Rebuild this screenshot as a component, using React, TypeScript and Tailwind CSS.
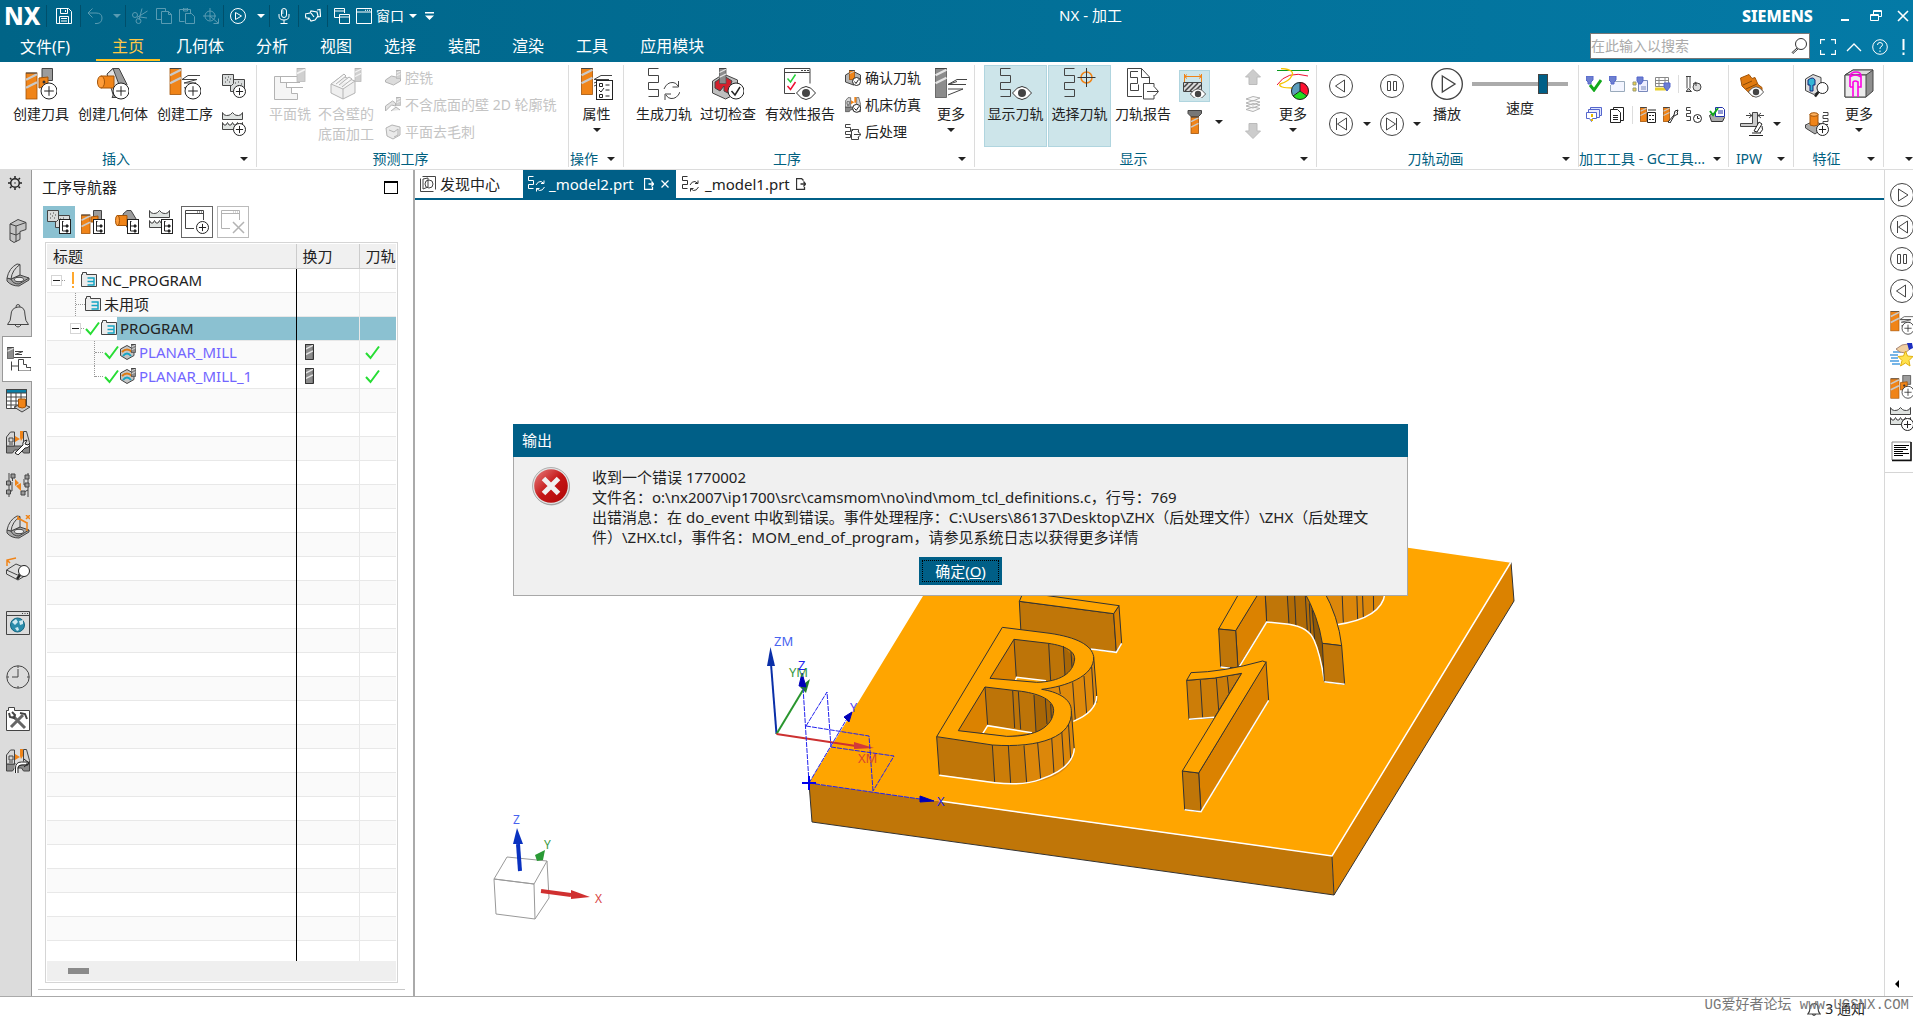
import type { ReactNode } from "react";

interface IconProps {
	size?: number;
}

interface SvgProps {
	size?: number;
	box?: number;
	className?: string;
	children: ReactNode;
}

function Svg({ size = 24, box = 24, className = "", children }: SvgProps) {
	return (
		<svg
			width={size}
			height={size}
			viewBox={`0 0 ${box} ${box}`}
			fill="none"
			stroke="#444"
			strokeWidth={1}
			className={`shrink-0 ${className}`}
			aria-hidden="true"
		>
			{children}
		</svg>
	);
}

/* ---------- icon building blocks ---------- */

function Drill({ x, y, w, h, gray = false }: { x: number; y: number; w: number; h: number; gray?: boolean }) {
	const step = w * 0.72;
	const count = Math.floor((h - w * 0.5) / step);
	const lines = Array.from({ length: count }, (_, i) => y + w * 0.62 + i * step);
	return (
		<g>
			<rect x={x} y={y} width={w} height={h} fill={gray ? "#8c8c8c" : "#f08418"} stroke={gray ? "#555" : "#a35408"} strokeWidth={0.8} />
			{lines.map((ly) => (
				<path key={ly} d={`M${x} ${ly}L${x + w} ${ly - w * 0.5}`} stroke={gray ? "#e4e4e4" : "#c9c9c9"} strokeWidth={w * 0.2} />
			))}
			<path d={`M${x} ${y}H${x + w}`} stroke="#444" />
		</g>
	);
}

function PlusBadge({ x, y, r = 6 }: { x: number; y: number; r?: number }) {
	return (
		<g stroke="#222">
			<circle cx={x} cy={y} r={r} fill="#fff" />
			<path d={`M${x - r * 0.6} ${y}h${r * 1.2}M${x} ${y - r * 0.6}v${r * 1.2}`} />
		</g>
	);
}

function TreeBadge() {
	return (
		<g stroke="#222">
			<rect x={12.5} y={9.5} width={11} height={14} fill="#fff" />
			<path d="M15.5 12v9h3M15.5 16h3" />
			<path d="M19 15h2v2h-2zM19 20h2v2h-2zM15 11.5h1.5" fill="#222" />
		</g>
	);
}

function Eye({ x, y, s = 1 }: { x: number; y: number; s?: number }) {
	return (
		<g transform={`translate(${x} ${y}) scale(${s})`} stroke="#333">
			<path d="M-9.5 0Q0-13 9.5 0Q0 13-9.5 0Z" fill="#fff" />
			<circle r={4} fill="#444" stroke="none" />
		</g>
	);
}

const serpentine = "M10.5 .5H.5v7h10v7H.5v7h10v7H.5";

/* ---------- ribbon icons, 32 px ---------- */

function CreateToolIcon({ size = 32 }: IconProps) {
	return (
		<Svg size={size} box={32}>
			<path d="M17 .5h10.5v12H17z" fill="#9c9c9c" />
			<path d="M14 10l9-1v9l-9 2z" fill="#f08418" stroke="#a35408" />
			<Drill x={1} y={5} w={11} h={26} />
			<circle cx={19} cy={14} r={1.5} fill="#333" stroke="none" />
			<PlusBadge x={24} y={23} r={8} />
		</Svg>
	);
}

function CreateGeometryIcon({ size = 32 }: IconProps) {
	return (
		<Svg size={size} box={32}>
			<path d="M10 6L16 .5h6l8 16-8 13h-7l6-13z" fill="#9c9c9c" />
			<path d="M10 6L16 .5l6 16-6 10z" fill="#e2e2e2" />
			<path d="M4 8h13v12H4z" fill="#f08418" stroke="#a35408" />
			<ellipse cx={4} cy={14} rx={3.5} ry={6} fill="#ff9d3a" stroke="#a35408" />
			<PlusBadge x={24} y={23} r={8} />
		</Svg>
	);
}

function CreateOperationIcon({ size = 32 }: IconProps) {
	return (
		<Svg size={size} box={32}>
			<Drill x={1} y={0.5} w={11} h={26} />
			<path d="M31 7.5H19l-6 4h15M15 15h12l-12 5M14 11.5h14L15 15" />
			<PlusBadge x={24} y={23} r={8} />
		</Svg>
	);
}

function ProgramBase() {
	return (
		<g>
			<path d="M8.5 5.5h14v9h-8v3h-6z" fill="#d9dcdc" />
			<path d="M.5 .5h11v9l-2 2h-9z" fill="#d9dcdc" />
			<path d="M3 4h1M6 3h1M8 5h1M5 6h1M3 8h1M7 8h1M13 9h1M16 8h1M19 10h1M16 12h1" />
		</g>
	);
}

function WaveBase() {
	return (
		<path
			d="M.5 .5v7h20v-7q-1 3-4 3t-4-1l-2-2-2 2q-1 1-4 1T.5 .5M.5 10.5v7h20v-7L19 13h-2l-1.5-2.5L14 13h-2l-1.5-2.5L9 13H7l-1.5-2.5L4 13H2z"
			fill="#dfe3e1"
		/>
	);
}

function ProgramPlusIcon() {
	return (
		<Svg>
			<ProgramBase />
			<PlusBadge x={17.5} y={17.5} />
		</Svg>
	);
}

function MethodPlusIcon() {
	return (
		<Svg>
			<WaveBase />
			<PlusBadge x={17.5} y={17.5} />
		</Svg>
	);
}

function PlanarMillIcon() {
	return (
		<Svg size={32} box={32} className="opacity-40">
			<path d="M6.5 8.5H.5v23h23v-6h-6v-6h-5v-5h-6z" fill="#e8e8e8" />
			<path d="M6 8.5h18M6 14.5h20M12 19.5h17" />
			<Drill x={23} y={0.5} w={8} h={13} gray />
		</Svg>
	);
}

function FloorMillIcon() {
	return (
		<Svg size={32} box={32} className="opacity-40">
			<path d="M1 16l11-8 13 5v12l-12 6-12-6z" fill="#d8d8d8" />
			<path d="M1 16l12 5 12-8M13 21v10M4 14l10-8 2 2-10 8M9 17l10-8 3 2-10 8" fill="#eee" />
			<Drill x={25} y={0.5} w={6} h={13} gray />
		</Svg>
	);
}

function SmallMillIcon({ variant }: { variant: number }) {
	return (
		<Svg size={16} box={16} className="opacity-40">
			{variant === 0 && <path d="M.5 10l6-4 9 2v3l-7 4-8-3z" fill="#aaa" />}
			{variant === 1 && <path d="M.5 9l7-5 3 2v3l-4-1-6 6zM6 14l5-4 4 3" fill="#bbb" />}
			{variant === 2 && <path d="M1 4l6-3 8 2v8l-7 4-6-3zM4 6l5 2 4-3v6l-4 2" fill="#ccc" />}
			{variant < 2 && <Drill x={11.5} y={0.5} w={4} h={8} gray />}
		</Svg>
	);
}

function PropertiesIcon() {
	return (
		<Svg size={32} box={32}>
			<Drill x={0.5} y={0.5} w={11} h={26} />
			<path d="M31 7.5H20l-7 4h15M13 15l8-3M13 18l5-2" />
			<rect x={15.5} y={12.5} width={16} height={19} fill="#fff" stroke="#222" />
			<path d="M18.5 15.5h3v3h-3zM18.5 26.5h3v3h-3zM18 22l2 2 3-4M24.5 17h4M24.5 22h4M24.5 28h4" stroke="#222" />
		</Svg>
	);
}

function GeneratePathIcon() {
	return (
		<Svg size={32} box={32}>
			<path d={serpentine} />
			<path d="M16 21q3-7 9-6.5 3 0 5 3.5M30.5 13v6h-6M32 24q-3 7-9 6.5-3 0-5-3.5M17 32v-6h6" />
		</Svg>
	);
}

function GougeCheckIcon() {
	return (
		<Svg size={32} box={32}>
			<path d="M.5 13l11-7 14 6v13l-12 6-13-6z" fill="#bfbfbf" />
			<path d="M3 14l9-6 8 5-4 12-4-2v-5l-4 5-5-3z" fill="#d3202c" />
			<Drill x={7.5} y={0.5} w={6.5} h={15} gray />
			<circle cx={24} cy={23} r={8} fill="#fff" stroke="#222" />
			<path d="M19.5 23l3.5 4 5-8" stroke="#222" strokeWidth={1.5} />
		</Svg>
	);
}

function ReportIcon() {
	return (
		<Svg size={32} box={32}>
			<path d="M11 25.5H.5V.5H26v15M.5 4.5H26" />
			<path d="M17 2.5h2M20 2.5h2M23 2.5h2" />
			<path d="M3.5 10.5l3 3.5 5-7.5" stroke="#25d33a" strokeWidth={1.5} />
			<path d="M3.5 18l3 3.5 5-7.5" stroke="#ee1133" strokeWidth={1.5} />
			<Eye x={22} y={25} />
		</Svg>
	);
}

function VerifyIcon() {
	return (
		<Svg size={16} box={16}>
			<path d="M.5 5l7-4 8 4v6l-7 4-8-3z" fill="#b5b5b5" />
			<Drill x={4.5} y={0.5} w={5} h={9} />
			<circle cx={11.5} cy={11.5} r={4} fill="#fff" stroke="#222" />
			<path d="M9.5 11.5l1.5 2 2.5-4" stroke="#222" />
		</Svg>
	);
}

function MachineBase() {
	return (
		<g>
			<path d="M.5 15h23v7h-6l-2-3h-7l-2 3h-6z" fill="#8a8a8a" />
			<path d="M.5 15V6l4-5h4v14zM17.5 15V.5h3l3 11V15z" fill="#d6d6d6" />
			<path d="M3 7h4v4H3zM3 13h4" />
			<path d="M9 5v6l5-3zM14 0h3v7l-2 3-1-3z" fill="#f08418" stroke="none" />
		</g>
	);
}

function SimulateIcon() {
	return (
		<Svg size={16} box={24}>
			<MachineBase />
			<circle cx={17.5} cy={17} r={6} fill="#fff" stroke="#222" strokeWidth={1.5} />
			<path d="M14 17l3 3 4-6" stroke="#222" strokeWidth={1.5} />
		</Svg>
	);
}

function PostIcon() {
	return (
		<Svg size={16} box={16}>
			<path d="M5.5 .5h-5v3h5v4h-5v3h5v3h-5M8 6.5H6.5v9h7v-3M6.5 5.5h7v3M9 10.5h7M13 7.5l3 3-3 3" />
		</Svg>
	);
}

function MoreOperationsIcon() {
	return (
		<Svg size={32} box={32}>
			<Drill x={0.5} y={0.5} w={11} h={29} gray />
			<path d="M32 11.5H22l-9 5h18M13 21h15l-15 6M13 16.5l9-3" />
		</Svg>
	);
}

function ShowPathIcon() {
	return (
		<Svg size={32} box={32}>
			<path d={serpentine} />
			<Eye x={22} y={25} />
		</Svg>
	);
}

function SelectPathIcon() {
	return (
		<Svg size={32} box={32}>
			<path d={serpentine} />
			<circle cx={22.5} cy={9.5} r={5.5} stroke="#f08418" strokeWidth={1.5} />
			<path d="M13.5 9.5h18M22.5 0v19" stroke="#333" />
		</Svg>
	);
}

function PathReportIcon() {
	return (
		<Svg size={32} box={32}>
			<path d="M15 28.5H.5V.5h14l8 8.5v7M14.5 .5v9h8" />
			<path d="M11 3.5H3.5v6h7v6h-7v7h8v-6" />
			<path d="M27 19v-3.5H16.5V31H27v-4M20 23.5h11M27.5 19l4 4.5-4 4.5" />
		</Svg>
	);
}

function StockViewIcon() {
	return (
		<Svg>
			<path d="M1.5 2.5h17M1.5 0v8M18.5 0v8M4 .5l-2.5 2L4 4.5M16 .5l2.5 2-2.5 2" stroke="#f08418" />
			<path d="M.5 8.5h18v9H.5z" fill="#d9d9d9" />
			<path d="M1 13l4-4M2 17l8-8M7 17l8-8M12 17l6-6" strokeWidth={1.5} />
			<Eye x={15} y={20} s={0.8} />
		</Svg>
	);
}

function BoltIcon() {
	return (
		<Svg>
			<path d="M5 .5h13.5v3L15 7H8.5L5 3.5z" fill="#777" />
			<Drill x={8} y={7} w={7.5} h={16.5} />
		</Svg>
	);
}

function FatArrow({ down = false }: { down?: boolean }) {
	return (
		<Svg size={16} box={16} className={down ? "rotate-180" : ""}>
			<path d="M8 .5L15.5 8H12v7.5H4V8H.5z" fill="#ccc" stroke="#bbb" />
		</Svg>
	);
}

function LayersIcon() {
	return (
		<Svg size={16} box={16} className="opacity-40">
			<path d="M1 3L8 .5 15 2 8 5zM1 7l7-2.5L15 6 8 9zM1 10l7-2.5L15 9l-7 3zM1 13.5L8 11l7 1.5-7 3z" fill="#eee" />
		</Svg>
	);
}

function MoreDisplayIcon() {
	return (
		<Svg size={32} box={32}>
			<path d="M0 2.5h32" stroke="#0a9a1f" />
			<path d="M0 17Q10 2 31 8" stroke="#ee1133" />
			<path d="M4 .5q14 1 11 7T3 16q-2 4 13 4" stroke="#f5c400" strokeWidth={1.3} />
			<path d="M23 23V14a9 9 0 0 1 7.5 13.5z" fill="#ff1030" stroke="none" />
			<path d="M23 23l7.5 4.5a9 9 0 0 1-15 0z" fill="#22dd22" stroke="none" />
			<path d="M23 23l-7.5 4.5A9 9 0 0 1 23 14z" fill="#5b9dbb" stroke="none" />
			<circle cx={23} cy={23} r={8.5} stroke="#222" />
			<path d="M23 14v9l7 5M23 23l-7 5" stroke="#222" />
		</Svg>
	);
}

type PlayKind = "play" | "back" | "pause" | "prev" | "next";

const playPaths: Record<PlayKind, string> = {
	play: "M8.5 6l9.5 6-9.5 6z",
	back: "M15.5 6L6.5 12l9 6z",
	pause: "M7.5 7.5h3v9h-3zM13.5 7.5h3v9h-3z",
	prev: "M17.5 6L8.5 12l9 6zM7.5 6v12",
	next: "M6.5 6l9 6-9 6zM16.5 6v12",
};

function PlayIcon({ kind, size = 24 }: { kind: PlayKind; size?: number }) {
	return (
		<Svg size={size}>
			<circle cx={12} cy={12} r={11.5} fill="#fff" />
			<path d={playPaths[kind]} />
		</Svg>
	);
}

/* ---------- GC toolkit icons, 16 px ---------- */

const gcHead = "M0 0h7v4l-2 2v2H2V6L0 4z";

function GcIcon({ kind }: { kind: string }) {
	return (
		<Svg size={16} box={16}>
			{kind === "check" && (
				<>
					<path d={gcHead} fill="#6d7fd0" stroke="#56c" />
					<path d="M4 9l4 5 7-10" stroke="#12a81c" strokeWidth={3} />
				</>
			)}
			{kind === "sheet" && (
				<>
					<path d="M4.5 5.5h11v10h-14V9" fill="#f3f5ff" stroke="#9ab" />
					<path d={gcHead} fill="#6d7fd0" stroke="#56c" />
				</>
			)}
			{kind === "tree" && (
				<>
					<path d="M6.5 4.5h9v11h-9z" fill="#eef" stroke="#78b" />
					<path d="M1 6h3v3H1zM1 12h3v3H1z" fill="#f2d547" stroke="#997" />
					<path d="M5 1h6v4L9 8H7L5 5z" fill="#6d7fd0" stroke="#56c" />
					<path d="M9 11h5M9 13h5" stroke="#78b" />
				</>
			)}
			{kind === "grid" && (
				<>
					<path d="M.5 1.5h13v9H.5zM.5 4.5h13M.5 7.5h13M4 1.5v9M10 1.5v9" stroke="#888" />
					<path d="M0 13h12" stroke="#e6cf2b" strokeWidth={3} />
					<path d="M9 7h6v4l-3 4-3-4z" fill="#6d7fd0" stroke="#56c" />
				</>
			)}
			{kind === "probe" && (
				<>
					<path d="M0 .5h5M1 .5v12M4 .5v12M0 15.5l2.5-3 3 3z" fill="#ccc" />
					<circle cx={11} cy={11} r={4} fill="#ddd" />
					<path d="M7 8l3-2v4" />
				</>
			)}
			{kind === "query" && (
				<>
					<path d="M4.5 .5h11v8h-11z" fill="#dce4ff" stroke="#56c" />
					<path d="M2.5 2.5h11v8h-11z" fill="#eef" stroke="#56c" />
					<path d="M.5 5.5h10v6h-4l-1 3-2-3h-3z" fill="#fff" stroke="#56c" />
					<path d="M6 7v3M6 12v2" stroke="#e6b800" strokeWidth={2} />
				</>
			)}
			{kind === "doc" && (
				<path d="M4.5 3V.5h10v13H12M1.5 2.5h7l3 3v10h-10zM4 8.5h5M4 10.5h5M4 12.5h5" stroke="#222" />
			)}
			{kind === "props" && (
				<>
					<Drill x={0.5} y={0.5} w={6} h={14} />
					<path d="M7.5 5.5h8v10h-8zM9 8.5h2M12 8.5h2M9 12.5h2M12 12.5h2M8 3h8" fill="#fff" stroke="#222" />
				</>
			)}
			{kind === "wrench" && (
				<>
					<Drill x={0.5} y={0.5} w={6} h={14} />
					<path d="M5 15l6-7 1-4 3-1-1 3 1 1-4 2-4 7z" fill="#fff" stroke="#222" />
				</>
			)}
			{kind === "time" && (
				<>
					<path d="M4.5 .5h-4v3h4v3h-4v3h4v4h-4" />
					<circle cx={11.5} cy={11.5} r={4} stroke="#222" />
					<path d="M11.5 9v2.5h2" stroke="#222" />
				</>
			)}
			{kind === "print" && (
				<>
					<path d="M.5 8.5l3-2h9l3 4-2 4h-11z" fill="#aaa" stroke="#333" />
					<path d="M6.5 .5h7l2 2v7h-9z" fill="#fff" stroke="#23a" />
					<path d="M9 4h5M9 6h5" stroke="#23a" />
					<path d="M1 4l3 4 5-7" stroke="#12a81c" strokeWidth={2} />
				</>
			)}
		</Svg>
	);
}

function IpwShowIcon() {
	return (
		<Svg>
			<path d="M.5 4L9 .5l3 4 3-1 3 7 4 3v4l-9 5L2 12z" fill="#e07a10" stroke="#a35408" />
			<path d="M3 11l9-4M6 15l11-5" stroke="#8a4a05" />
			<Eye x={16} y={18} s={0.8} />
		</Svg>
	);
}

function IpwMeasureIcon() {
	return (
		<Svg>
			<path d="M.5 11.5h12V.5h5v14H.5z" fill="#ccc" />
			<path d="M6 3.5h6M24 3.5h-6M9 1l3 2.5L9 6M21 1l-3 2.5L21 6" />
			<path d="M9 23.5h14M12 21h9" stroke="#222" />
			<path d="M14 19l5-9 3 2-5 8zM22 14q2 4-2 7" fill="#fff" stroke="#222" />
		</Svg>
	);
}

function FeatureFindIcon() {
	return (
		<Svg>
			<path d="M.5 5L8 .5l8 3v12l-7 5-8.5-4z" fill="#ddd" />
			<path d="M3 6q5-4 7 0v5H8v6H5v-6H3z" fill="#35b5d5" stroke="#127" />
			<circle cx={17.5} cy={14} r={5.5} fill="#fff" stroke="#222" />
			<path d="M13.5 18L10 22.5" stroke="#222" strokeWidth={2.5} />
		</Svg>
	);
}

function FeaturePathIcon() {
	return (
		<Svg>
			<path d="M.5 13L9 9l9 4-8 6z" fill="#c9c9c9" />
			<path d="M.5 13v3l9.5 6 8-6v-3" fill="#aaa" />
			<path d="M5 2v11q4 2 8 0V2z" fill="#f08418" stroke="#a35408" />
			<ellipse cx={9} cy={2.5} rx={4} ry={1.8} fill="#ffb25e" stroke="#a35408" />
			<path d="M18 .5h5v3h-5v3h5v3h-5v3h5" />
			<PlusBadge x={17.5} y={17.5} />
		</Svg>
	);
}

function MoreFeaturesIcon() {
	return (
		<Svg size={32} box={32}>
			<path d="M2 7l8-5h20v21l-7 6H2z" fill="#8f8f8f" />
			<path d="M2 7l8-5h20l-7 5z" fill="#dcdcdc" />
			<path d="M2 7h21v22H2z" fill="#ececec" />
			<path d="M7 19V8q1-4 6-4t5 4v11h-3v10M7 19h3v10M7 9q5-4 11 0M10 19v-5q2-2 5 0v5" stroke="#ff00e5" strokeWidth={1.6} />
		</Svg>
	);
}

/* ---------- resource bar / navigator icons ---------- */

function TreeIcon({ kind }: { kind: "program" | "tool" | "geometry" | "method" }) {
	return (
		<Svg>
			{kind === "program" && <ProgramBase />}
			{kind === "tool" && (
				<>
					<path d="M12.5 .5h8v9h-8z" fill="#9c9c9c" />
					<path d="M10 7l7-1v6h-7z" fill="#f08418" stroke="#a35408" />
					<Drill x={0.5} y={5} w={8.5} h={18.5} />
				</>
			)}
			{kind === "geometry" && (
				<>
					<path d="M8 4L12 .5h4l6 10-6 12-6-8z" fill="#9c9c9c" />
					<path d="M2 5.5h10v10H2z" fill="#f08418" stroke="#a35408" />
					<ellipse cx={2.5} cy={10.5} rx={2} ry={5} fill="#ff9d3a" stroke="#a35408" />
				</>
			)}
			{kind === "method" && <WaveBase />}
			<TreeBadge />
		</Svg>
	);
}

function WindowPlusIcon({ close = false }: { close?: boolean }) {
	return (
		<Svg className={close ? "opacity-40" : ""}>
			<path d="M9 18.5H.5V.5h18V10M.5 3.5h18M12 2h1M14 2h1M16 2h1" />
			{close ? <path d="M12 12l11 11M23 12L12 23" strokeWidth={1.5} /> : <PlusBadge x={17.5} y={17.5} />}
		</Svg>
	);
}

function FolderIcon() {
	return (
		<Svg size={16} box={16}>
			<path d="M.5 14.5v-12h1v-2h4v2h10v12z" fill="#ececec" />
			<path d="M6.5 6h7M13 5.5v8M6.5 9.5h6M6.5 13h7" stroke="#16a5c4" strokeWidth={1.5} />
		</Svg>
	);
}

function PlanarOpIcon() {
	return (
		<Svg size={16} box={16}>
			<path d="M.5 5L7 1.5l7 4v6l-7 4-6.5-4z" fill="#c5c5c5" />
			<path d="M2 8q5-5 10 0" stroke="#e07a10" strokeWidth={2} />
			<path d="M3 12q4-5 8 0" stroke="#16a5c4" strokeWidth={2} />
			<Drill x={11.5} y={0.5} w={4} h={8} gray />
		</Svg>
	);
}

function CheckIcon() {
	return (
		<Svg size={16} box={16}>
			<path d="M1 9l4.5 5L14 2.5" stroke="#27dd34" strokeWidth={2} />
		</Svg>
	);
}

function BracketBase() {
	return (
		<>
			<path d="M1 15v3q4 5 12 5l10-6v-2l-9-3L5 16z" fill="#a8a8a8" />
			<path d="M1 15Q3 5 11 1l3 .5V12l-9 4z" fill="#dadada" />
			<path d="M5 16Q6 7 14 1.5M5 16q2 5 8 5l10-6" />
			<ellipse cx={13} cy={16.5} rx={4.5} ry={2.2} fill="#ededed" />
		</>
	);
}

const railIcons: Record<string, ReactNode> = {
	assembly: (
		<>
			<path d="M4 5L12 .5l8 3v7l-6 2v8l-6 3L4 21z" fill="#c4c4c4" />
			<path d="M4 5l6 2 10-3.5M10 7v16M4 14l6 2 4-2" />
		</>
	),
	part: <BracketBase />,
	bell: <path d="M1.5 20.5Q5 17 5 11 5 4 12 3t7 8q0 6 3.5 9.5zM10 3q0-2.5 2-2.5T14 3M9 21q3 4 6 0" />,
	operation: (
		<>
			<Drill x={0.5} y={0.5} w={6} h={11} gray />
			<path d="M7 10.5h17M8 4.5h8l-8 3h7M4.5 14.5v9M4.5 19h7M11.5 24V12.5h5v5h3v3H24V24z" />
		</>
	),
	table: (
		<>
			<path d="M.5 .5h20v19H.5zM.5 8h20M.5 12h20M.5 16h20M5 4v15M10 4v15M15 4v15" fill="#fff" />
			<path d="M.5 .5h20V4H.5z" fill="#0b7fa6" />
			<path d="M8 18l8-3 8 3-8 5z" fill="#ccc" />
			<path d="M12.5 10v8q4 2 7 0v-8z" fill="#f08418" stroke="#a35408" />
		</>
	),
	machineTool: (
		<>
			<MachineBase />
			<path d="M9 22l8-8q-1-4 4-5l-2 4 3 1 2-2q0 5-5 5l-7 7z" fill="#fff" stroke="#222" />
		</>
	),
	dependency: (
		<>
			<path d="M3 0v24M6.5 4v4M3 10H1M3 18h3V9M22 0v24M18 6v6h4M16 20l6-3" />
			<path d="M5 1h4v4H5zM.5 8h4v4h-4zM.5 17h4v4h-4zM19 2h4v4h-4zM19 10h4v4h-4zM15 18h4v4h-4z" fill="#999" />
			<path d="M9 6l4 4-4 3zM15 10v8l-5-5z" fill="#f08418" stroke="none" />
		</>
	),
	pmi: (
		<>
			<BracketBase />
			<path d="M12 1v4M12 3l9 5M21 7v9M20 0l4 4M24 0l-4 4" stroke="#f08418" strokeWidth={1.5} />
		</>
	),
	inspect: (
		<>
			<path d="M.5 13L10 7l12 5v5l-10 6L.5 17z" fill="#ddd" />
			<path d="M.5 13l11 5L22 12" />
			<path d="M1 9V3l9-2M1 3l3 3" stroke="#f08418" strokeWidth={1.5} />
			<circle cx={18} cy={14} r={5.5} fill="#fff" stroke="#222" />
			<path d="M14 18l-3 4" stroke="#222" strokeWidth={2.5} />
		</>
	),
	web: (
		<>
			<path d="M.5 .5h23v23H.5zM.5 4.5h23M16 2.5h1M18.5 2.5h1M21 2.5h1" />
			<circle cx={11.5} cy={14} r={7} fill="#2b8cab" stroke="#15667f" />
			<path d="M6 11l4-3 2 3-3 3zM13 10l4-1v4l-3 1zM9 17l3-1 1 3-2 1z" fill="#cfe9f1" stroke="none" />
		</>
	),
	history: (
		<>
			<circle cx={12} cy={12} r={11.2} />
			<path d="M12 4v8H6M12 1v2M12 21v2M1 12h2M21 12h2" />
		</>
	),
	tools: (
		<>
			<path d="M.5 3.5h2v-3h6v3h15v20H.5z" fill="#fff" />
			<path d="M5 20L17 8M7 9l12 12" stroke="#666" strokeWidth={3} />
			<path d="M3 6l1 4 4 1 1-3-3-3M14 6l5 1 2 5" strokeWidth={2} />
		</>
	),
	machineOut: (
		<>
			<MachineBase />
			<path d="M10 24v-5q0-5 6-5h4" stroke="#fff" strokeWidth={3} />
			<path d="M9.5 24v-5q0-6 6-6h7M18 10l5 4-5 4M12 24v-5q0-3 4-3h6" stroke="#222" />
		</>
	),
};

const railItems = [
	{ key: "assembly", title: "装配导航器", box: "mt-4 h-[38px]" },
	{ key: "part", title: "部件导航器", box: "mt-1 h-[42px]" },
	{ key: "bell", title: "通知中心", box: "h-10" },
	{ key: "operation", title: "工序导航器", box: "h-[46px] border border-r-0 border-[#999] bg-white" },
	{ key: "table", title: "加工特征导航器", box: "h-[38px]" },
	{ key: "machineTool", title: "机床导航器", box: "mt-[2px] h-[42px]" },
	{ key: "dependency", title: "依赖关系", box: "h-[42px]" },
	{ key: "pmi", title: "PMI 导航器", box: "h-[42px]" },
	{ key: "inspect", title: "检查导航器", box: "h-[42px]" },
	{ key: "web", title: "Web 浏览器", box: "mt-3 h-[42px]" },
	{ key: "history", title: "历史记录", box: "mt-3 h-[42px]" },
	{ key: "tools", title: "加工向导", box: "h-[42px]" },
	{ key: "machineOut", title: "机床库", box: "h-[42px]" },
];

/* ---------- shared controls ---------- */

function Caret({ className = "" }: { className?: string }) {
	return (
		<svg width={8} height={4} viewBox="0 0 8 4" className={`shrink-0 ${className}`} aria-hidden="true">
			<path d="M0 0h8L4 4z" fill="currentColor" />
		</svg>
	);
}

function BigButton({
	icon,
	label,
	width = "w-16",
	className = "",
	caret = false,
}: {
	icon: ReactNode;
	label: ReactNode;
	width?: string;
	className?: string;
	caret?: boolean;
}) {
	return (
		<button type="button" className={`flex h-[82px] shrink-0 flex-col items-center pt-[3px] ${width} ${className}`}>
			{icon}
			<span className="mt-1 text-sm leading-5 whitespace-nowrap">{label}</span>
			{caret && <Caret className="mt-1" />}
		</button>
	);
}

function RowButton({ icon, label }: { icon: ReactNode; label: string }) {
	return (
		<button type="button" className="flex h-[27px] items-center gap-1 pb-[2px] text-sm whitespace-nowrap">
			{icon}
			{label}
		</button>
	);
}

function RibbonGroup({
	label,
	width,
	caret = true,
	children,
}: {
	label: string;
	width: string;
	caret?: boolean;
	children: ReactNode;
}) {
	return (
		<section className={`flex shrink-0 flex-col border-r border-[#dcdcdc] ${width}`}>
			<div className="flex h-[86px]">{children}</div>
			<div className="flex h-4 items-center text-[#00607f]">
				<span className="flex-1 text-center text-sm leading-4 whitespace-nowrap">{label}</span>
				{caret ? (
					<button type="button" aria-label={`${label}选项`} className="flex h-4 w-6 shrink-0 items-center justify-center text-[#222]">
						<Caret />
					</button>
				) : (
					<span className="w-6 shrink-0" />
				)}
			</div>
		</section>
	);
}

function IconButton({ title, children, className = "" }: { title: string; children?: ReactNode; className?: string }) {
	return (
		<button type="button" aria-label={title} className={`flex shrink-0 items-center justify-center ${className}`}>
			{children}
		</button>
	);
}

/* ---------- title bar and menu ---------- */

function TitleSeparator() {
	return <span className="h-[22px] w-px shrink-0 bg-[#004f6b]" />;
}

function TitleBar() {
	return (
		<div className="flex h-[31px] items-center text-white">
			<span className="w-[46px] pl-1 text-2xl leading-6 font-extrabold">NX</span>
			<TitleSeparator />
			<IconButton title="保存" className="w-[33px]">
				<Svg size={16} box={16} className="[&_path]:stroke-white">
					<path d="M.5 .5h12l3 3v12H.5zM4.5 .5v5h7v-5M9.5 2v2M3.5 15.5v-7h9v7M5 10.5h6M5 13h6" />
				</Svg>
			</IconButton>
			<TitleSeparator />
			<div className="flex items-center opacity-35">
				<IconButton title="撤消" className="w-7">
					<Svg size={16} box={16} className="[&_path]:stroke-white">
						<path d="M5.5 .5L1 5l4.5 4.5M1 5h8q6 0 6 5t-5 5.5H8" />
					</Svg>
				</IconButton>
				<IconButton title="撤消列表" className="w-4">
					<Caret />
				</IconButton>
			</div>
			<TitleSeparator />
			<div className="flex items-center pl-[2px] opacity-35">
				<IconButton title="剪切" className="w-6">
					<Svg size={16} box={16} className="[&_*]:stroke-white">
						<path d="M15.5 3L5 9.5M10 .5L8 8l-1 4" />
						<circle cx={3} cy={7} r={2.5} />
						<circle cx={6.5} cy={13} r={2.5} />
						<path d="M8 9l7 1" />
					</Svg>
				</IconButton>
				<IconButton title="复制" className="w-[23px]">
					<Svg size={16} box={16} className="[&_path]:stroke-white">
						<path d="M5.5 11.5h-5V.5h9v3M5.5 3.5h7l3 3v9h-10zM12.5 3.5v3h3" />
					</Svg>
				</IconButton>
				<IconButton title="粘贴" className="w-[23px]">
					<Svg size={16} box={16} className="[&_path]:stroke-white">
						<path d="M5.5 13.5h-5v-12h11v4M4.5 0v3h4V0zM6.5 5.5h6l3 3v7h-9z" />
					</Svg>
				</IconButton>
				<IconButton title="移动对象" className="w-[25px]">
					<Svg size={16} box={16} className="[&_*]:stroke-white">
						<circle cx={7} cy={8} r={5} />
						<path d="M0 8h13M7 0v12M7 8l8 7M10.5 15.5h5v-5" />
					</Svg>
				</IconButton>
			</div>
			<TitleSeparator />
			<IconButton title="播放" className="w-7">
				<Svg size={16} box={16} className="[&_*]:stroke-white">
					<circle cx={8} cy={8} r={7.5} />
					<path d="M5.5 4.5l6 3.5-6 3.5z" />
				</Svg>
			</IconButton>
			<IconButton title="播放列表" className="w-[17px]">
				<Caret />
			</IconButton>
			<TitleSeparator />
			<IconButton title="语音" className="w-7">
				<Svg size={16} box={16} className="[&_*]:stroke-white">
					<rect x={5.5} y={0.5} width={5} height={9} rx={2.5} />
					<path d="M3 6v2q0 4 5 4t5-4V6M8 12v3M4.5 15.5h7M5.5 3h2M5.5 5h2" />
				</Svg>
			</IconButton>
			<TitleSeparator />
			<IconButton title="触控" className="w-7">
				<Svg size={16} box={16} className="[&_path]:stroke-white">
					<path d="M0 6l5-1 1-2 6 1 1 4-3 4-4 1-2-3H1zM6 5l3 4M12 2l3-.5 .5 7-3 .5M4 10l-1 2" strokeWidth={1.2} />
				</Svg>
			</IconButton>
			<TitleSeparator />
			<IconButton title="切换窗口" className="w-7">
				<Svg size={16} box={16} className="[&_path]:stroke-white">
					<path d="M5 9.5H.5v-9h10V5M.5 3h10M5.5 6.5h10v9h-10zM5.5 9h10" />
				</Svg>
			</IconButton>
			<button type="button" className="flex items-center gap-1 text-sm">
				<Svg size={16} box={16} className="[&_path]:stroke-white">
					<path d="M.5 .5h15v15H.5zM.5 4h15M9 2.3h1M11 2.3h1M13 2.3h1" />
				</Svg>
				窗口
				<Caret className="ml-px" />
			</button>
			<IconButton title="自定义" className="ml-[2px] w-5">
				<svg width={9} height={8} viewBox="0 0 9 8" fill="#fff" aria-hidden="true">
					<path d="M0 0h9v1.5H0zM0 3.5h9L4.5 8z" />
				</svg>
			</IconButton>
			<h1 className="flex-1 text-center text-[15px]">NX - 加工</h1>
			<span className="w-[89px] text-base font-extrabold">SIEMENS</span>
			<IconButton title="最小化" className="w-7">
				<span className="mt-2 h-[2px] w-2 bg-white" />
			</IconButton>
			<IconButton title="还原" className="w-[34px]">
				<Svg size={12} box={12} className="[&_path]:stroke-white">
					<path d="M3.5 4V.5h8v6H9M.5 4.5h8v6h-8zM3.5 1.5h8M.5 5.5h8" />
				</Svg>
			</IconButton>
			<IconButton title="关闭" className="w-5">
				<Svg size={12} box={12} className="[&_path]:stroke-white">
					<path d="M1 1l10 10M11 1L1 11" strokeWidth={1.6} />
				</Svg>
			</IconButton>
		</div>
	);
}

const menuTabs = ["主页", "几何体", "分析", "视图", "选择", "装配", "渲染", "工具", "应用模块"];

function MenuBar() {
	return (
		<nav className="flex h-[31px] items-center text-base text-white">
			<button type="button" className="h-full w-24 pr-[6px] text-center">
				文件(F)
			</button>
			{menuTabs.map((tab) => (
				<button
					key={tab}
					type="button"
					className={`h-[29px] border-b-2 px-4 whitespace-nowrap ${
						tab === "主页" ? "border-[#ffc220] text-[#ffc845]" : "border-transparent"
					}`}
				>
					{tab}
				</button>
			))}
			<label className="mr-[5px] mb-[2px] ml-auto flex h-[26px] w-[220px] items-center border border-[#777] bg-white">
				<input
					type="search"
					aria-label="搜索"
					placeholder="在此输入以搜索"
					className="min-w-0 flex-1 text-sm text-[#222] outline-none placeholder:text-[#aaa]"
				/>
				<Svg size={16} box={16} className="mr-[2px]">
					<circle cx={10} cy={6} r={5.5} stroke="#333" />
					<path d="M6 10l-5 4.5 1 1L7 11" stroke="#333" />
				</Svg>
			</label>
			<IconButton title="全屏" className="w-[26px]">
				<Svg size={16} box={16} className="[&_path]:stroke-white">
					<path d="M.5 5V.5H5M11 .5h4.5V5M15.5 11v4.5H11M5 15.5H.5V11" strokeWidth={1.3} />
				</Svg>
			</IconButton>
			<IconButton title="最小化功能区" className="w-[26px]">
				<Svg size={16} box={16} className="[&_path]:stroke-white">
					<path d="M1 12l7-7 7 7" strokeWidth={1.3} />
				</Svg>
			</IconButton>
			<IconButton title="帮助" className="w-[26px]">
				<Svg size={16} box={16} className="[&_*]:stroke-white">
					<circle cx={8} cy={8} r={7.3} />
					<path d="M5.5 6q0-2.5 2.5-2.5t2.500 2.2q0 1.3-1.5 2.1T8 10M8 11.5V13" />
				</Svg>
			</IconButton>
			<IconButton title="警报" className="w-5">
				<svg width={3} height={16} viewBox="0 0 3 16" fill="#fff" aria-hidden="true">
					<path d="M.5 0h2v11h-2zM.5 13.5h2V16h-2z" />
				</svg>
			</IconButton>
		</nav>
	);
}

/* ---------- ribbon ---------- */

function ToolbarDivider() {
	return <span className="h-[18px] w-px bg-[#ddd]" />;
}

function Ribbon() {
	return (
		<div className="flex h-[108px] shrink-0 border-b border-[#dcdcdc] bg-white pt-[3px] pb-[2px] text-[#222]">
			<RibbonGroup label="插入" width="w-[257px]">
				<BigButton icon={<CreateToolIcon />} label="创建刀具" className="ml-[9px]" />
				<BigButton icon={<CreateGeometryIcon />} label="创建几何体" width="w-20" />
				<BigButton icon={<CreateOperationIcon />} label="创建工序" />
				<div className="flex w-[34px] flex-col items-center gap-[14px] pt-[9px]">
					<IconButton title="创建程序">
						<ProgramPlusIcon />
					</IconButton>
					<IconButton title="创建方法">
						<MethodPlusIcon />
					</IconButton>
				</div>
			</RibbonGroup>

			<RibbonGroup label="预测工序" width="w-[312px]" caret={false}>
				<BigButton icon={<PlanarMillIcon />} label="平面铣" width="w-12" className="ml-[9px] text-[#c4c4c4]" />
				<BigButton
					icon={<FloorMillIcon />}
					label={
						<>
							不含壁的
							<br />
							底面加工
						</>
					}
					className="text-[#c4c4c4]"
				/>
				<div className="flex flex-col pl-[7px] text-[#c4c4c4]">
					<RowButton icon={<SmallMillIcon variant={0} />} label="腔铣" />
					<RowButton icon={<SmallMillIcon variant={1} />} label="不含底面的壁 2D 轮廓铣" />
					<RowButton icon={<SmallMillIcon variant={2} />} label="平面去毛刺" />
				</div>
			</RibbonGroup>

			<RibbonGroup label="操作" width="w-[55px]">
				<BigButton icon={<PropertiesIcon />} label="属性" width="w-[55px]" caret />
			</RibbonGroup>

			<RibbonGroup label="工序" width="w-[351px]">
				<BigButton icon={<GeneratePathIcon />} label="生成刀轨" className="ml-2" />
				<BigButton icon={<GougeCheckIcon />} label="过切检查" />
				<BigButton icon={<ReportIcon />} label="有效性报告" width="w-20" />
				<div className="flex w-[88px] flex-col pl-[5px]">
					<RowButton icon={<VerifyIcon />} label="确认刀轨" />
					<RowButton icon={<SimulateIcon />} label="机床仿真" />
					<RowButton icon={<PostIcon />} label="后处理" />
				</div>
				<BigButton icon={<MoreOperationsIcon />} label="更多" width="w-[46px]" caret />
			</RibbonGroup>

			<RibbonGroup label="显示" width="w-[342px]">
				<BigButton icon={<ShowPathIcon />} label="显示刀轨" width="w-[63px]" className="ml-[9px] bg-[#cde5ea] outline -outline-offset-1 outline-[#b0d5df]" />
				<BigButton icon={<SelectPathIcon />} label="选择刀轨" width="w-[63px]" className="ml-px bg-[#cde5ea] outline -outline-offset-1 outline-[#b0d5df]" />
				<BigButton icon={<PathReportIcon />} label="刀轨报告" />
				<div className="ml-1 grid w-[60px] shrink-0 grid-cols-[32px_16px] content-start gap-y-2 pt-[5px]">
					<IconButton title="显示毛坯" className="col-span-2 h-8 w-[31px] border border-[#b0d5df] bg-[#cde5ea]">
						<StockViewIcon />
					</IconButton>
					<IconButton title="刀具显示">
						<BoltIcon />
					</IconButton>
					<IconButton title="刀具显示选项">
						<Caret />
					</IconButton>
				</div>
				<div className="flex w-7 shrink-0 flex-col items-center gap-[11px] pt-1">
					<IconButton title="上移一层">
						<FatArrow />
					</IconButton>
					<IconButton title="层">
						<LayersIcon />
					</IconButton>
					<IconButton title="下移一层">
						<FatArrow down />
					</IconButton>
				</div>
				<BigButton icon={<MoreDisplayIcon />} label="更多" width="w-[49px]" className="pl-[3px]" caret />
			</RibbonGroup>

			<RibbonGroup label="刀轨动画" width="w-[262px]">
				<div className="grid grid-cols-[24px_27px_24px_26px] content-start items-center gap-y-[14px] pt-[9px] pl-3">
					<IconButton title="反向播放" className="col-span-2 w-6">
						<PlayIcon kind="back" />
					</IconButton>
					<IconButton title="暂停" className="col-span-2 w-6">
						<PlayIcon kind="pause" />
					</IconButton>
					<IconButton title="上一步">
						<PlayIcon kind="prev" />
					</IconButton>
					<IconButton title="上一步选项">
						<Caret />
					</IconButton>
					<IconButton title="下一步">
						<PlayIcon kind="next" />
					</IconButton>
					<IconButton title="下一步选项">
						<Caret />
					</IconButton>
				</div>
				<BigButton icon={<PlayIcon kind="play" size={32} />} label="播放" width="w-[34px]" />
				<label className="ml-2 flex w-24 flex-col items-center pt-[9px] text-sm leading-5">
					<input
						type="range"
						defaultValue={77}
						className="h-5 w-24 appearance-none bg-transparent [&::-webkit-slider-runnable-track]:h-1 [&::-webkit-slider-runnable-track]:bg-[#ababab] [&::-webkit-slider-thumb]:-mt-2 [&::-webkit-slider-thumb]:h-5 [&::-webkit-slider-thumb]:w-[10px] [&::-webkit-slider-thumb]:appearance-none [&::-webkit-slider-thumb]:border [&::-webkit-slider-thumb]:border-[#444] [&::-webkit-slider-thumb]:bg-[#005f87]"
					/>
					<span className="mt-1">速度</span>
				</label>
			</RibbonGroup>

			<RibbonGroup label="加工工具 - GC工具..." width="w-[150px]">
				<div className="flex flex-col gap-[15px] pt-[11px] pl-[7px]">
					<div className="flex h-4 items-center gap-[7px]">
						<IconButton title="部件验证">
							<GcIcon kind="check" />
						</IconButton>
						<IconButton title="工作说明">
							<GcIcon kind="sheet" />
						</IconButton>
						<IconButton title="刀具表">
							<GcIcon kind="tree" />
						</IconButton>
						<IconButton title="工序表">
							<GcIcon kind="grid" />
						</IconButton>
						<ToolbarDivider />
						<IconButton title="测量">
							<GcIcon kind="probe" />
						</IconButton>
					</div>
					<div className="flex h-4 items-center gap-[7px]">
						<IconButton title="批量查询">
							<GcIcon kind="query" />
						</IconButton>
						<IconButton title="车间文档">
							<GcIcon kind="doc" />
						</IconButton>
						<ToolbarDivider />
						<IconButton title="刀具属性">
							<GcIcon kind="props" />
						</IconButton>
						<IconButton title="刀具编辑">
							<GcIcon kind="wrench" />
						</IconButton>
						<IconButton title="加工时间">
							<GcIcon kind="time" />
						</IconButton>
						<IconButton title="输出检查">
							<GcIcon kind="print" />
						</IconButton>
					</div>
				</div>
			</RibbonGroup>

			<RibbonGroup label="IPW" width="w-[65px]">
				<div className="grid grid-cols-[24px_26px] content-start items-center gap-y-[14px] pt-[9px] pl-[11px]">
					<IconButton title="显示 IPW" className="col-span-2 w-6">
						<IpwShowIcon />
					</IconButton>
					<IconButton title="测量 IPW">
						<IpwMeasureIcon />
					</IconButton>
					<IconButton title="测量 IPW 选项">
						<Caret />
					</IconButton>
				</div>
			</RibbonGroup>

			<RibbonGroup label="特征" width="w-[90px]">
				<div className="flex w-[42px] flex-col items-end gap-[14px] pt-[9px] pr-[6px]">
					<IconButton title="查找特征">
						<FeatureFindIcon />
					</IconButton>
					<IconButton title="创建特征工艺">
						<FeaturePathIcon />
					</IconButton>
				</div>
				<BigButton icon={<MoreFeaturesIcon />} label="更多" width="w-12" caret />
			</RibbonGroup>

			<div className="flex flex-1 items-end justify-end overflow-hidden">
				<IconButton title="功能区选项" className="h-4">
					<Caret />
				</IconButton>
			</div>
		</div>
	);
}

/* ---------- left side ---------- */

function ResourceBar() {
	return (
		<aside className="flex w-8 shrink-0 flex-col border-r border-[#999] bg-[#dcdcdc] pl-[2px]">
			<IconButton title="设置" className="h-[26px] w-[26px]">
				<Svg size={14} box={14}>
					<circle cx={7} cy={7} r={4.3} stroke="#222" strokeWidth={1.5} />
					<path
						d="M7 0v2M7 12v2M0 7h2M12 7h2M2 2l1.5 1.5M10.5 10.5L12 12M12 2l-1.5 1.5M2 12l1.5-1.5M6.5 7h1"
						stroke="#222"
						strokeWidth={1.5}
					/>
				</Svg>
			</IconButton>
			{railItems.map(({ key, title, box }) => (
				<IconButton key={key} title={title} className={`-mr-px w-[30px] pl-[2px] ${box}`}>
					<Svg>{railIcons[key]}</Svg>
				</IconButton>
			))}
		</aside>
	);
}

function Expander() {
	return (
		<IconButton title="折叠" className="h-[11px] w-[11px] border border-[#d5d5d5] bg-white">
			<span className="h-px w-[7px] bg-[#222]" />
		</IconButton>
	);
}

interface TreeRow {
	name: string;
	cell: ReactNode;
	selected?: boolean;
	operation?: boolean;
}

const treeRows: TreeRow[] = [
	{
		name: "NC_PROGRAM",
		cell: (
			<div className="flex h-[23px] items-center pl-1">
				<Expander />
				<span className="w-[3px] border-t border-dotted border-[#999]" />
				<span className="ml-[7px] flex h-4 flex-col justify-between">
					<span className="h-3 w-[2px] bg-[#ffa82e]" />
					<span className="h-[2px] w-[2px] bg-[#ffa82e]" />
				</span>
				<span className="ml-[7px] flex">
					<FolderIcon />
				</span>
				<span className="ml-1">NC_PROGRAM</span>
			</div>
		),
	},
	{
		name: "未用项",
		cell: (
			<div className="flex h-[23px] items-center pl-7">
				<span className="h-[23px] border-l border-dotted border-[#999]" />
				<span className="w-[9px] border-t border-dotted border-[#999]" />
				<FolderIcon />
				<span className="ml-[3px]">未用项</span>
			</div>
		),
	},
	{
		name: "PROGRAM",
		selected: true,
		cell: (
			<div className="flex h-[23px] items-center pl-[23px]">
				<Expander />
				<span className="mr-px w-[3px] border-t border-dotted border-[#999]" />
				<CheckIcon />
				<FolderIcon />
				<span className="flex h-[23px] flex-1 items-center bg-[#8bc1d1] pl-[3px]">PROGRAM</span>
			</div>
		),
	},
	...["PLANAR_MILL", "PLANAR_MILL_1"].map((name, i) => ({
		name,
		operation: true,
		cell: (
			<div className="flex h-[23px] items-center pl-[47px]">
				<span className={`w-0 border-l border-dotted border-[#999] ${i === 0 ? "h-[23px]" : "h-3 self-start"}`} />
				<span className="mr-px w-2 border-t border-dotted border-[#999]" />
				<CheckIcon />
				<PlanarOpIcon />
				<span className="ml-[3px] text-[#7266ff]">{name}</span>
			</div>
		),
	})),
];

const emptyRows = Array.from({ length: 24 }, (_, i) => i);

function OperationNavigator() {
	return (
		<section className="flex w-[383px] shrink-0 flex-col border-r-2 border-[#aaa] bg-white text-[#222]">
			<header className="flex h-9 items-center justify-between pr-[15px] pb-[2px] pl-[10px]">
				<h2 className="text-[15px]">工序导航器</h2>
				<IconButton title="最大化" className="h-[13px] w-[14px] border border-t-2 border-black" />
			</header>
			<div className="flex h-8 gap-[2px] pl-[11px]">
				<IconButton title="程序顺序视图" className="w-8 bg-[#8bc1d1]">
					<TreeIcon kind="program" />
				</IconButton>
				<IconButton title="机床视图" className="w-8">
					<TreeIcon kind="tool" />
				</IconButton>
				<IconButton title="几何视图" className="w-8">
					<TreeIcon kind="geometry" />
				</IconButton>
				<IconButton title="加工方法视图" className="w-8">
					<TreeIcon kind="method" />
				</IconButton>
				<IconButton title="新建视图" className="ml-[2px] w-8 border border-[#666]">
					<WindowPlusIcon />
				</IconButton>
				<IconButton title="删除视图" className="ml-[2px] w-8 border border-[#bbb]">
					<WindowPlusIcon close />
				</IconButton>
			</div>
			<div className="mt-1 mr-[15px] mb-[6px] ml-[13px] flex min-h-0 flex-1 flex-col border border-[#d5d5d5] p-px">
				<div className="min-h-0 flex-1 overflow-hidden">
					<table className="w-full table-fixed border-collapse text-[15px] leading-5">
						<colgroup>
							<col className="w-[249px]" />
							<col className="w-[63px]" />
							<col />
						</colgroup>
						<thead>
							<tr className="h-6 border-b border-[#ccc] bg-[#f0f0f0] text-left">
								<th className="border-r border-[#ccc] p-0 pl-[6px] font-normal">标题</th>
								<th className="border-r border-[#ccc] p-0 pl-[6px] font-normal">换刀</th>
								<th className="p-0 pl-[6px] font-normal whitespace-nowrap">刀轨</th>
							</tr>
						</thead>
						<tbody>
							{treeRows.map(({ name, cell, selected, operation }) => (
								<tr key={name} className="h-[23px] border-b border-[#e8e8e8] even:bg-[#fafafa]">
									<td className="border-r border-black p-0">{cell}</td>
									<td className={`border-r border-[#e8e8e8] p-0 pl-2 ${selected ? "bg-[#8bc1d1]" : ""}`}>
										{operation && (
											<svg width={9} height={16} viewBox="0 0 9 16" fill="none" aria-label="换刀" className="block">
												<Drill x={0.5} y={0.5} w={7.5} h={15} gray />
												<path d="M.5 .5h8v15h-8z" stroke="#333" />
											</svg>
										)}
									</td>
									<td className={`p-0 pl-[5px] ${selected ? "bg-[#8bc1d1]" : ""}`}>{operation && <CheckIcon />}</td>
								</tr>
							))}
							{emptyRows.map((row) => (
								<tr key={row} className="h-6 border-b border-[#e8e8e8] even:bg-[#fafafa]">
									<td className="border-r border-black p-0" />
									<td className="border-r border-[#e8e8e8] p-0" />
									<td className="p-0" />
								</tr>
							))}
						</tbody>
					</table>
				</div>
				<div className="flex h-5 shrink-0 items-center bg-[#efefef] pl-[21px]">
					<span className="h-[6px] w-[21px] bg-[#8a8a8a]" />
				</div>
			</div>
			<div className="mr-2 mb-[6px] ml-[6px] border-t border-[#c8c8c8]" />
		</section>
	);
}

/* ---------- graphics window ---------- */

const edge = { stroke: "#333", strokeWidth: 1, vectorEffect: "non-scaling-stroke" as const };
const rim = { stroke: "#fff", strokeWidth: 1.5, fill: "none", vectorEffect: "non-scaling-stroke" as const };

function Plate() {
	return (
		<g>
			<path d="M809 783L923 596L1000 470L1408 547L1511 562L1332 856Z" fill="#ffa500" />
			<path d="M809 783L1332 856L1334 895L812 822Z" fill="#c07608" />
			<path d="M1332 856L1511 562L1514 601L1334 895Z" fill="#db8200" />
			<path d="M809 783L812 822L1334 895L1514 601L1511 562M1332 856L1334 895" fill="none" {...edge} />
			<path d="M940 801L1332 856L1511 562L1408 547" {...rim} />
		</g>
	);
}

function LetterB() {
	return (
		<g transform="translate(740 590) scale(.33333)">
			{/* bar behind the letter */}
			<path d="M838 34L1121 71L1129 187L1052 177L843 130Z" fill="#c07608" {...edge} />
			<path d="M1121 71L1137 47L1145 160L1129 187Z" fill="#db8200" {...edge} />
			<path d="M850 6L838 34L1121 71L1137 47L930 18Z" fill="#ffa500" {...edge} />
			<path d="M1052 177L1129 187L1145 160" {...rim} />

			{/* upper bowl wall */}
			<path d="M905 298C970 290 1060 255 1061 200L1070 315Q1070 365 1000 394Z" fill="#e08a0a" />
			<path d="M957 288L961 312M998 277L1006 392M1032 258L1040 372M1055 230L1062 345M1061 200L1070 315V338" fill="none" {...edge} />
			<path d="M1070 318Q1070 365 1000 394" {...rim} />

			{/* lower bowl wall */}
			<path d="M590 440L757 465L764 576L598 554Z" fill="#c07608" />
			<path d="M757 465L852 466L860 579Q810 584 764 576Z" fill="#cc7d08" />
			<path d="M852 466C930 455 1000 430 994 362L1003 480C1000 540 930 575 860 579Z" fill="#dc870a" />
			<path
				d="M590 440L598 554M757 465L764 576M805 467L812 581M852 466L860 579M893 458L902 568M935 442L942 550M965 420L972 530M985 395L992 505M994 362L1003 480"
				fill="none"
				{...edge}
			/>
			<path d="M598 556L764 578Q850 588 902 568Q1000 535 1003 475" {...rim} />

			{/* top face with both openings */}
			<path
				d="M787 112L930 130C1010 142 1055 165 1061 200C1064 260 975 290 905 298C950 305 994 325 994 362C1000 440 900 475 757 465L590 440Z"
				fill="#ffa500"
				{...edge}
			/>
			<path d="M822 148L925 160C980 168 1004 185 1004 207C1000 250 960 270 905 277L750 265Z" fill="#bd7408" />
			<path d="M822 148L750 265L828 270Z" fill="#db8200" />
			<path d="M828 262L925 273L890 277L826 271Z" fill="#ffa500" />
			<path d="M970 168L1004 207Q1000 235 975 255Z" fill="#a86606" />
			<path d="M822 148L829 262M926 160L932 272M970 168L975 255M993 185L996 232" fill="none" {...edge} />
			<path d="M826 272L830 262L918 272" {...rim} />
			<path d="M822 148L925 160C980 168 1004 185 1004 207C1000 250 960 275 890 277L750 265Z" fill="none" {...edge} />

			<path d="M735 291L845 304C900 312 941 330 941 362C938 410 890 440 800 439L655 422Z" fill="#bd7408" />
			<path d="M735 291L655 422L728 430L743 406Z" fill="#db8200" />
			<path d="M743 406L878 428L800 439L728 430Z" fill="#ffa500" />
			<path d="M882 315Q941 330 941 362Q935 405 888 425Z" fill="#a86606" />
			<path
				d="M735 291L743 406M818 302L824 414M835 304L842 418M882 315L888 425M916 327L921 402M932 342L934 385"
				fill="none"
				{...edge}
			/>
			<path d="M728 431L743 407L876 428" {...rim} />
			<path d="M735 291L845 304C900 312 941 330 941 362C938 410 890 440 800 439L655 422Z" fill="none" {...edge} />
		</g>
	);
}

function RightGlyphs() {
	return (
		<g transform="translate(1140 590) scale(.33333)">
			{/* legs of the upper letter */}
			<path d="M345 0H500Q530 60 547 160L553 272Q540 180 520 145Q500 105 447 103L380 96Z" fill="#b26c06" />
			<path d="M375 0H441L447 103L380 96Z" fill="#c07608" />
			<path d="M510 40Q535 90 547 160L553 272Q540 180 524 150Z" fill="#8f5806" />
			<path d="M375 0L380 96M441 0L447 103M463 0L468 108M495 0L502 122M508 40L512 130M517 60L524 150" fill="none" {...edge} />
			<path d="M287 122L360 0H375L380 96L294 234Z" fill="#db8200" {...edge} />
			<path d="M303 0L236 117L287 122L362 0Z" fill="#ffa500" {...edge} />
			<path d="M236 117L287 122L294 234L242 231Z" fill="#c07608" {...edge} />
			<path d="M242 231L270 235M298 230L380 96L447 103Q505 112 522 150Q540 190 553 272" {...rim} />
			<path d="M550 0H735Q732 90 590 104Z" fill="#dc870a" />
			<path d="M606 0L610 98M650 0L653 88M667 0L670 82M700 0L701 62" fill="none" {...edge} />
			<path d="M735 10Q725 85 590 104" {...rim} />
			<path d="M490 0Q535 80 547 160L605 167Q595 80 550 0Z" fill="#ffa500" {...edge} />
			<path d="M547 160L605 167L614 283L553 275Z" fill="#c07608" {...edge} />
			<path d="M553 275L614 283" {...rim} />

			{/* digit one */}
			<path d="M140 271Q225 268 305 250L223 383L147 388Z" fill="#cc7d08" {...edge} />
			<path d="M181 270L188 385M229 265L236 360M262 260L267 310" fill="none" {...edge} />
			<path d="M147 388L223 382" {...rim} />
			<path d="M176 549L378 215L386 331L183 665Z" fill="#db8200" {...edge} />
			<path d="M127 543L176 549L183 665L134 659Z" fill="#c07608" {...edge} />
			<path d="M153 248Q250 246 368 213L378 217L176 549L127 543L305 250Q225 268 140 271Z" fill="#ffa500" {...edge} />
			<path d="M134 659L183 665L386 331" {...rim} />
		</g>
	);
}

function CoordinateSystems() {
	return (
		<g>
			{/* machine coordinate system */}
			<path d="M776.5 734L771 664" stroke="#0a2fa8" strokeWidth={2} />
			<path d="M770.5 647L767 666H775Z" fill="#0a2fa8" />
			<path d="M776.5 734L803 690" stroke="#2a962f" strokeWidth={2} />
			<path d="M810 679L800 687L806 693Z" fill="#23802a" />
			<path d="M776.5 734L856 746" stroke="#cc3030" strokeWidth={2} />
			<path d="M874 748L854 742V749Z" fill="#d23a3a" />
			{/* work coordinate system */}
			<g fill="none" stroke="#2222ee" strokeDasharray="5 1">
				<path d="M809 783L803 687M809 783L848 717M809 783L920 799" />
				<path d="M806 726L827 692L831 747M806 726L869 736L873 791M831 747L894 756L873 791" />
			</g>
			<path d="M802 673L799 686L806 687ZM852 712L844 717L849 722ZM934 801L920 796V802Z" fill="#0000b8" stroke="#0000b8" />
			<path d="M802 783H816M809 776V790" stroke="#0000ee" strokeWidth={2} />
			<g className="text-[13px]">
				<text x={774} y={646} fill="#4763f0">ZM</text>
				<text x={789} y={677} fill="#3a9a3f">YM</text>
				<text x={798} y={670} fill="#2222ee">Z</text>
				<text x={850} y={712} fill="#5544ee">Y</text>
				<text x={858} y={763} fill="#d8452f">XM</text>
				<text x={937} y={806} fill="#2222dd">X</text>
			</g>
			{/* view triad */}
			<path d="M507 857L547 861L534 884L494 879ZM494 879L534 884L535 919L496 914ZM547 861L549 898L535 919" fill="none" stroke="#999" />
			<path d="M520 871L518 844" stroke="#0a32c0" strokeWidth={4} />
			<path d="M517 828L513 844H523Z" fill="#0a32c0" />
			<path d="M541 891L571 895" stroke="#d03030" strokeWidth={4} />
			<path d="M590 897L571 890V899Z" fill="#d03030" />
			<path d="M545 850L535 855L537 861L543 860Z" fill="#2a9a35" />
			<g className="text-[12px]">
				<text x={513} y={824} fill="#4763f0">Z</text>
				<text x={544} y={849} fill="#3a9a3f">Y</text>
				<text x={595} y={903} fill="#d84545">X</text>
			</g>
		</g>
	);
}

function PartTabIcon({ stroke }: { stroke: string }) {
	return (
		<svg width={17} height={16} viewBox="0 0 17 16" fill="none" stroke={stroke} aria-hidden="true">
			<path d="M5.5 .5h-5v4h5v4h-5v4h5M8 9q2-4 5-3.5l3 2M16 4.5v3h-3M16.5 11q-2 4-5 3.5l-3-2M8.5 15.5v-3h3" />
		</svg>
	);
}

function ModifiedIcon({ stroke }: { stroke: string }) {
	return (
		<svg width={10} height={12} viewBox="0 0 10 12" fill="none" stroke={stroke} aria-hidden="true">
			<path d="M8.5 9v2.5h-8V.5h5l2 2M4.5 6h5M7.5 3.5l2 2.5-2 2.5" strokeWidth={1.3} />
		</svg>
	);
}

function GraphicsWindow() {
	return (
		<main className="flex min-w-0 flex-1 flex-col border-r border-[#d8d8d8]">
			<div className="flex h-[30px] shrink-0 items-stretch border-b-2 border-[#005f87] text-[15px] text-[#222]">
				<button type="button" className="flex w-[108px] items-center gap-1 pl-[5px]">
					<Svg size={16} box={16}>
						<path d="M2.5 .5h13v13M.5 2.5v13h13M3 13V3l5-1v9z" />
						<circle cx={9} cy={8} r={4} />
					</Svg>
					发现中心
				</button>
				<div className="flex w-[153px] items-center bg-[#005f87] pl-[5px] text-white">
					<button type="button" className="flex items-center gap-1">
						<PartTabIcon stroke="#fff" />
						_model2.prt
					</button>
					<span className="ml-auto">
						<ModifiedIcon stroke="#fff" />
					</span>
					<IconButton title="关闭 _model2.prt" className="w-[22px]">
						<Svg size={8} box={8}>
							<path d="M.5 .5l7 7M7.5 .5l-7 7" stroke="#fff" strokeWidth={1.3} />
						</Svg>
					</IconButton>
				</div>
				<button type="button" className="flex items-center gap-[6px] pl-[6px]">
					<PartTabIcon stroke="#333" />
					_model1.prt
					<ModifiedIcon stroke="#333" />
				</button>
			</div>
			<div className="min-h-0 flex-1 overflow-hidden bg-white">
				<svg className="block h-full w-full" viewBox="415 200 1469 796" preserveAspectRatio="xMinYMin meet" role="img" aria-label="零件模型">
					<Plate />
					<LetterB />
					<RightGlyphs />
					<CoordinateSystems />
				</svg>
			</div>
		</main>
	);
}

function SideToolbar() {
	return (
		<aside className="flex w-7 shrink-0 flex-col justify-between overflow-hidden bg-white">
			<div className="flex flex-col items-start gap-2 border-b border-[#d5d5d5] pt-[13px] pb-[9px] pl-[5px]">
				<IconButton title="播放">
					<PlayIcon kind="play" />
				</IconButton>
				<IconButton title="上一步">
					<PlayIcon kind="prev" />
				</IconButton>
				<IconButton title="暂停">
					<PlayIcon kind="pause" />
				</IconButton>
				<IconButton title="反向播放">
					<PlayIcon kind="back" />
				</IconButton>
				<IconButton title="创建工序">
					<CreateOperationIcon size={24} />
				</IconButton>
				<IconButton title="收藏">
					<Svg>
						<path d="M3 9h8M0 12h8M1 15h7M0 18h9M2 21h8" stroke="#4a9de0" strokeWidth={1.3} />
						<path d="M6 6l6-4 6-1 2 5-5 4-5-1z" fill="#f0cfa0" stroke="#a87" />
						<path d="M17 0h5l1 5-4 2z" fill="#1c2fc0" stroke="none" />
						<path d="M15.5 8l2 5 5.5 .5-4 4 1 5.5-4.5-3-5 3 1.5-5.5-4-4 5.5-.5z" fill="#ffe14d" stroke="#e0b010" />
					</Svg>
				</IconButton>
				<IconButton title="创建刀具">
					<CreateToolIcon size={24} />
				</IconButton>
				<IconButton title="创建方法">
					<MethodPlusIcon />
				</IconButton>
				<IconButton title="列表">
					<Svg>
						<path d="M2 3h19v18H2z" fill="#fff" stroke="#888" />
						<path d="M21 3v18.5H2" stroke="#111" strokeWidth={1.5} />
						<path d="M4 6.5h15M4 8.5h12M4 10.5h14M4 12.5h9M4 14.5h15M4 16.5h9" stroke="#000" />
					</Svg>
				</IconButton>
			</div>
			<IconButton title="展开工具栏" className="mb-2 h-2 w-6">
				<Caret className="rotate-90 text-black" />
			</IconButton>
		</aside>
	);
}

/* ---------- message box ---------- */

function ErrorDialog() {
	return (
		<div className="pointer-events-none fixed inset-0 flex items-center justify-center pt-[2px] pl-2">
			<div role="alertdialog" aria-labelledby="dialog-title" className="pointer-events-auto w-[895px] text-[15px] leading-5 text-[#222]">
				<h2 id="dialog-title" className="flex h-[33px] items-center bg-[#005f87] px-[9px] text-white">
					输出
				</h2>
				<div className="flex flex-col border border-t-0 border-[#a8a8a8] bg-[#f0f0f0] px-[18px] pt-[10px] pb-[10px]">
					<div className="flex gap-[22px]">
						<svg width={38} height={40} viewBox="0 0 38 40" className="shrink-0" aria-hidden="true">
							<defs>
								<linearGradient id="error-ball" x1="0" y1="0" x2="1" y2="1">
									<stop offset="0" stopColor="#e88080" />
									<stop offset=".5" stopColor="#c41616" />
									<stop offset="1" stopColor="#b00808" />
								</linearGradient>
							</defs>
							<circle cx={19.5} cy={20} r={18.5} fill="#b5b5b5" />
							<circle cx={19} cy={19} r={18.5} fill="#e3e3e3" stroke="#888" strokeWidth={0.6} />
							<circle cx={19} cy={19} r={16.8} fill="url(#error-ball)" />
							<path d="M11.5 11.5l15 15M26.5 11.5l-15 15" stroke="#f0f0f0" strokeWidth={5} />
						</svg>
						<p className="whitespace-nowrap">
							收到一个错误 1770002
							<br />
							文件名：o:\nx2007\ip1700\src\camsmom\no\ind\mom_tcl_definitions.c，行号：769
							<br />
							出错消息：在 do_event 中收到错误。事件处理程序：C:\Users\86137\Desktop\ZHX（后处理文件）\ZHX（后处理文
							<br />
							件）\ZHX.tcl，事件名：MOM_end_of_program，请参见系统日志以获得更多详情
						</p>
					</div>
					<button type="button" className="mt-[10px] h-7 w-[83px] self-center bg-[#005f87] p-[3px] text-white">
						<span className="flex h-full items-center justify-center border border-dotted border-black">
							确定(<u>O</u>)
						</span>
					</button>
				</div>
			</div>
		</div>
	);
}

function StatusBar() {
	return (
		<footer className="relative flex h-[21px] shrink-0 items-end justify-end overflow-hidden border-t border-[#aaa] bg-white pr-12 text-sm text-[#222]">
			<button type="button" className="flex items-center gap-1 leading-4">
				<Svg size={14}>
					<path d="M1.5 20.5Q5 17 5 11 5 4 12 3t7 8q0 6 3.5 9.5zM9 21q3 4 6 0" strokeWidth={2} />
				</Svg>
				3 通知
			</button>
			<span className="absolute top-0 right-1 font-['Liberation_Mono','Noto_Sans_CJK_SC',monospace] text-sm leading-4 text-[#777]">
				UG爱好者论坛 www.UGSNX.COM
			</span>
		</footer>
	);
}

export default function App() {
	return (
		<div className="flex h-screen flex-col overflow-hidden bg-white font-['Noto_Sans','Noto_Sans_CJK_SC',sans-serif]">
			<header className="shrink-0 bg-linear-to-r from-[#006487] to-[#047aa6]">
				<TitleBar />
				<MenuBar />
			</header>
			<Ribbon />
			<div className="flex min-h-0 flex-1">
				<ResourceBar />
				<OperationNavigator />
				<GraphicsWindow />
				<SideToolbar />
			</div>
			<StatusBar />
			<ErrorDialog />
		</div>
	);
}
